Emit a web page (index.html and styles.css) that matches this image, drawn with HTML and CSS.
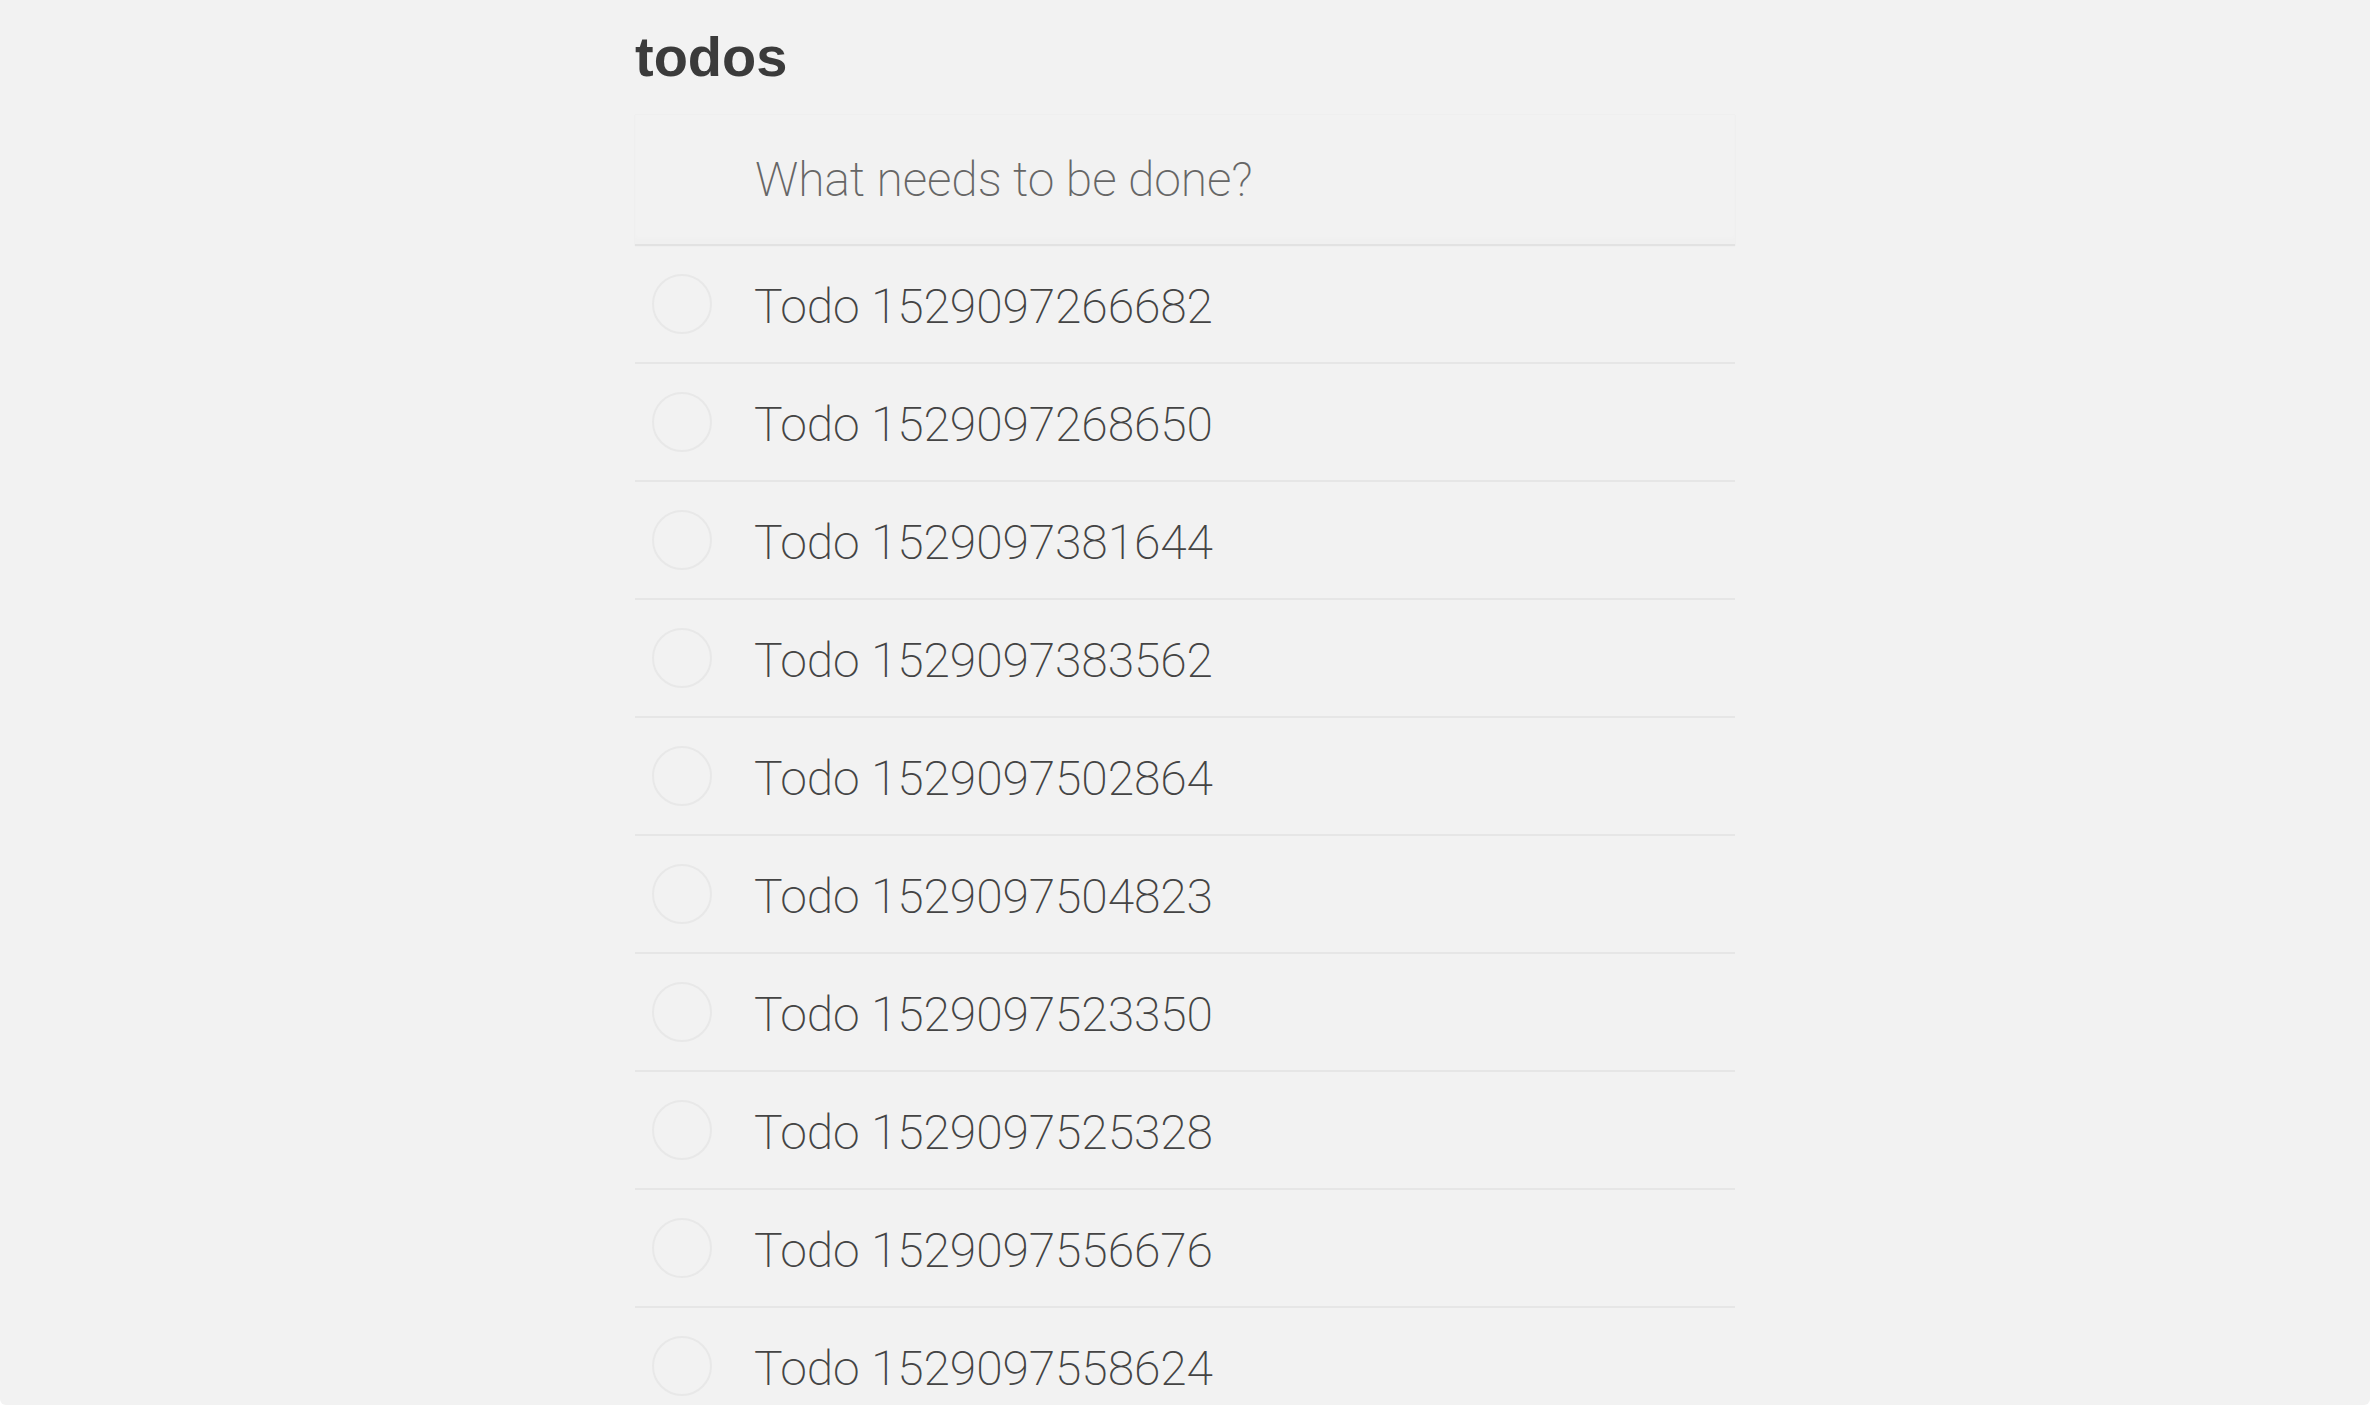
FILE: index.html
```html
<!DOCTYPE html>
<html lang="en">
<head>
<meta charset="utf-8">
<title>todos</title>
<link rel="stylesheet" href="styles.css">
</head>
<body>
<div class="app">
  <h1 class="title">todos</h1>
  <div class="new-todo"><span class="placeholder">What needs to be done?</span></div>
  <ul class="todo-list">
    <li class="todo"><span class="toggle"></span><span class="label">Todo 1529097266682</span></li>
    <li class="todo"><span class="toggle"></span><span class="label">Todo 1529097268650</span></li>
    <li class="todo"><span class="toggle"></span><span class="label">Todo 1529097381644</span></li>
    <li class="todo"><span class="toggle"></span><span class="label">Todo 1529097383562</span></li>
    <li class="todo"><span class="toggle"></span><span class="label">Todo 1529097502864</span></li>
    <li class="todo"><span class="toggle"></span><span class="label">Todo 1529097504823</span></li>
    <li class="todo"><span class="toggle"></span><span class="label">Todo 1529097523350</span></li>
    <li class="todo"><span class="toggle"></span><span class="label">Todo 1529097525328</span></li>
    <li class="todo"><span class="toggle"></span><span class="label">Todo 1529097556676</span></li>
    <li class="todo"><span class="toggle"></span><span class="label">Todo 1529097558624</span></li>
  </ul>
</div>
</body>
</html>
```

FILE: styles.css
```css
html {
  margin: 0;
  padding: 0;
  background: #ffffff;
}

body {
  margin: 0;
  height: 100vh;
  overflow: hidden;
  background: #f2f2f2;
  border-radius: 0 0 6px 6px;
  font-family: Roboto, "Liberation Sans", sans-serif;
  color: #4a4a4a;
}

.app {
  width: 1100px;
  margin: 0 auto;
  padding-top: 25px;
}

.title {
  margin: 0 0 26px 0;
  font-family: "Liberation Sans", Arial, sans-serif;
  font-weight: 700;
  font-size: 56px;
  line-height: 64px;
  color: #3b3b3b;
}

.new-todo {
  box-sizing: border-box;
  height: 131px;
  display: flex;
  align-items: center;
  padding-left: 120px;
  background: #f2f2f2;
  border-bottom: 2px solid #e2e2e2;
  box-shadow: inset 0 -6px 4px rgba(0, 0, 0, 0.012), 0 0 1px rgba(0, 0, 0, 0.07);
}

.placeholder {
  font-weight: 200;
  font-size: 48px;
  line-height: 58px;
  letter-spacing: -0.1px;
  color: #666666;
}

.todo-list {
  list-style: none;
  margin: 0;
  padding: 0;
}

.todo {
  height: 116px;
  display: flex;
  align-items: center;
  border-bottom: 2px solid #e6e6e6;
}

.toggle {
  box-sizing: border-box;
  width: 60px;
  height: 60px;
  margin-left: 17px;
  margin-right: 42px;
  border: 2px solid #e8e8e8;
  border-radius: 50%;
  flex: none;
}

.label {
  padding-top: 5px;
  font-weight: 200;
  font-size: 48px;
  line-height: 58px;
  letter-spacing: -0.12px;
  color: #444444;
}
```
